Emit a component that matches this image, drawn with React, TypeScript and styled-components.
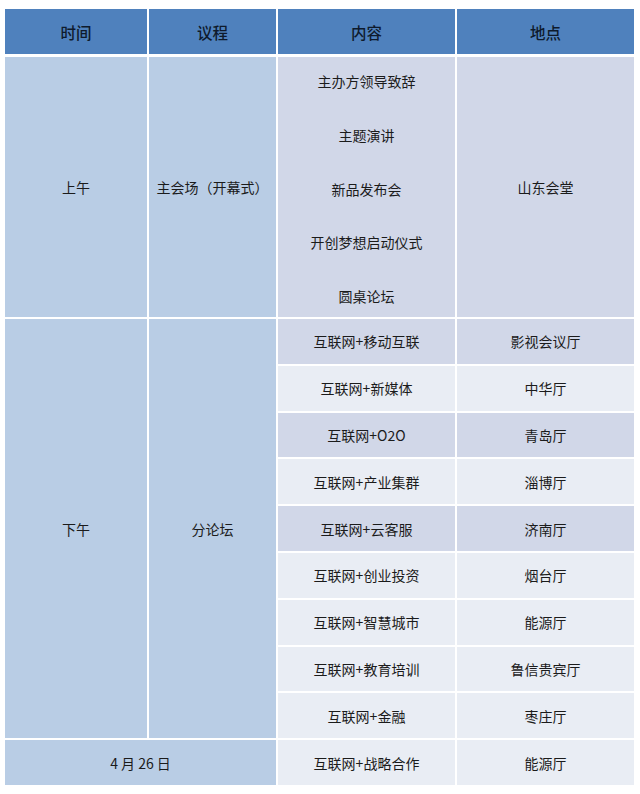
import styled, { createGlobalStyle } from "styled-components";

const GlobalStyle = createGlobalStyle`
  html, body {
    margin: 0;
    padding: 0;
    background: #ffffff;
  }
  body {
    font-family: "Noto Sans CJK SC", "Noto Sans", sans-serif;
    color: #1b1b1b;
  }
`;

const sessions = [
  { topic: "互联网+移动互联", room: "影视会议厅", tone: "dark" },
  { topic: "互联网+新媒体", room: "中华厅", tone: "light" },
  { topic: "互联网+O2O", room: "青岛厅", tone: "dark" },
  { topic: "互联网+产业集群", room: "淄博厅", tone: "light" },
  { topic: "互联网+云客服", room: "济南厅", tone: "dark" },
  { topic: "互联网+创业投资", room: "烟台厅", tone: "light" },
  { topic: "互联网+智慧城市", room: "能源厅", tone: "light" },
  { topic: "互联网+教育培训", room: "鲁信贵宾厅", tone: "light" },
  { topic: "互联网+金融", room: "枣庄厅", tone: "light" },
];

const opening = ["主办方领导致辞", "主题演讲", "新品发布会", "开创梦想启动仪式", "圆桌论坛"];

const App = () => {
  return (
    <>
      <GlobalStyle />
      <Page>
        <Header>
          <HeadCell>时间</HeadCell>
          <HeadCell>议程</HeadCell>
          <HeadCell>内容</HeadCell>
          <HeadCell>地点</HeadCell>
        </Header>
        <Body>
          <Cell $tone="blue" $col="1" $row="1">上午</Cell>
          <Cell $tone="blue" $col="2" $row="1">主会场（开幕式）</Cell>
          <ItemList $col="3" $row="1">
            {opening.map((item) => <Item key={item}>{item}</Item>)}
          </ItemList>
          <Cell $tone="dark" $col="4" $row="1">山东会堂</Cell>

          <Cell $tone="blue" $col="1" $row="2 / span 9">下午</Cell>
          <Cell $tone="blue" $col="2" $row="2 / span 9">分论坛</Cell>
          {sessions.map((s, i) => (
            <Row key={s.topic}>
              <Cell $tone={s.tone} $col="3" $row={String(i + 2)}>{s.topic}</Cell>
              <Cell $tone={s.tone} $col="4" $row={String(i + 2)}>{s.room}</Cell>
            </Row>
          ))}

          <Cell $tone="blue" $col="1 / span 2" $row="11">4 月 26 日</Cell>
          <Cell $tone="light" $col="3" $row="11">互联网+战略合作</Cell>
          <Cell $tone="light" $col="4" $row="11">能源厅</Cell>
        </Body>
      </Page>
    </>
  );
};

export default App;

const tones: Record<string, string> = {
  blue: "#b9cde5",
  dark: "#d1d7e8",
  light: "#e9edf4",
};

const Page = styled.div`
  width: 640px;
  padding: 9px 0 0 5px;
  box-sizing: border-box;
`;

const columns = "142px 127px 177px 177px";

const Header = styled.div`
  display: grid;
  grid-template-columns: ${columns};
  grid-template-rows: 45px;
  column-gap: 2px;
  margin-bottom: 3px;
`;

const HeadCell = styled.div`
  display: flex;
  align-items: center;
  justify-content: center;
  background: #4f81bd;
  color: #0e1a2c;
  font-size: 15.5px;
  font-weight: 500;
`;

const Body = styled.div`
  display: grid;
  grid-template-columns: ${columns};
  grid-template-rows: 260px repeat(9, 44.8px) 45px;
  gap: 2px;
`;

const Row = styled.div`
  display: contents;
`;

const Cell = styled.div<{ $tone: string; $col: string; $row: string }>`
  grid-column: ${(p) => p.$col};
  grid-row: ${(p) => p.$row};
  display: flex;
  align-items: center;
  justify-content: center;
  background: ${(p) => tones[p.$tone]};
  font-size: 14px;
  color: #1b1b1b;
`;

const ItemList = styled.div<{ $col: string; $row: string }>`
  grid-column: ${(p) => p.$col};
  grid-row: ${(p) => p.$row};
  display: flex;
  flex-direction: column;
  align-items: center;
  gap: 33.75px;
  padding: 14px 0 11px;
  background: ${tones.dark};
  box-sizing: border-box;
`;

const Item = styled.div`
  font-size: 14px;
  line-height: 20px;
  color: #1b1b1b;
`;
